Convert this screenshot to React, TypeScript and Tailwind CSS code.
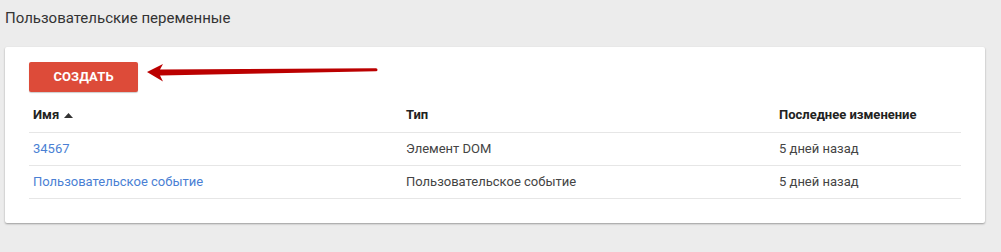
import React from "react";

const rows = [
  { name: "34567", type: "Элемент DOM", changed: "5 дней назад" },
  { name: "Пользовательское событие", type: "Пользовательское событие", changed: "5 дней назад" },
];

export default function App() {
  return (
    <div className="w-[1001px] h-[252px] bg-[#ececec] overflow-hidden" style={{ fontFamily: "Roboto, 'Noto Sans', sans-serif" }}>
      <div className="pl-[5px] pt-[8px] h-[47px] text-[15px] leading-[20px] text-[#333]">Пользовательские переменные</div>
      <div className="relative ml-[5px] w-[980px] h-[176px] bg-white rounded-[2px] shadow-[0_1px_2px_rgba(0,0,0,0.35)] px-[24px] pt-[15px]">
        <div className="flex items-center">
          <button className="w-[109px] h-[30px] bg-[#dd4b39] rounded-[2px] text-white text-[13px] font-bold tracking-[0.1px] shadow-[0_1px_1px_rgba(0,0,0,0.2)]">
            СОЗДАТЬ
          </button>
        </div>
        <svg className="absolute left-[138px] top-[14px]" width="240" height="24" viewBox="0 0 240 24">
          <path d="M4 11 L20 3 L17 8.5 L233 7.3 A1.5 1.5 0 0 1 233 10.3 L17 14.5 L20 20.5 Z" fill="#bb0000" />
        </svg>
        <div className="mt-[6px] text-[13px]">
          <div className="grid grid-cols-[373px_373px_1fr] h-[35px] items-center border-b border-[#e6e6e6] font-bold text-[#222]">
            <div className="pl-[4px] flex items-center gap-[5px]">
              Имя
              <svg width="9" height="5" viewBox="0 0 9 5"><path d="M0 5 L4.5 0 L9 5 Z" fill="#333" /></svg>
            </div>
            <div className="pl-[4px]">Тип</div>
            <div className="pl-[4px]">Последнее изменение</div>
          </div>
          {rows.map((r) => (
            <div key={r.name} className="grid grid-cols-[373px_373px_1fr] h-[33px] items-center border-b border-[#e6e6e6] text-[#444]">
              <div className="pl-[4px] text-[#4a7fd4]">{r.name}</div>
              <div className="pl-[4px]">{r.type}</div>
              <div className="pl-[4px]">{r.changed}</div>
            </div>
          ))}
        </div>
      </div>
    </div>
  );
}
